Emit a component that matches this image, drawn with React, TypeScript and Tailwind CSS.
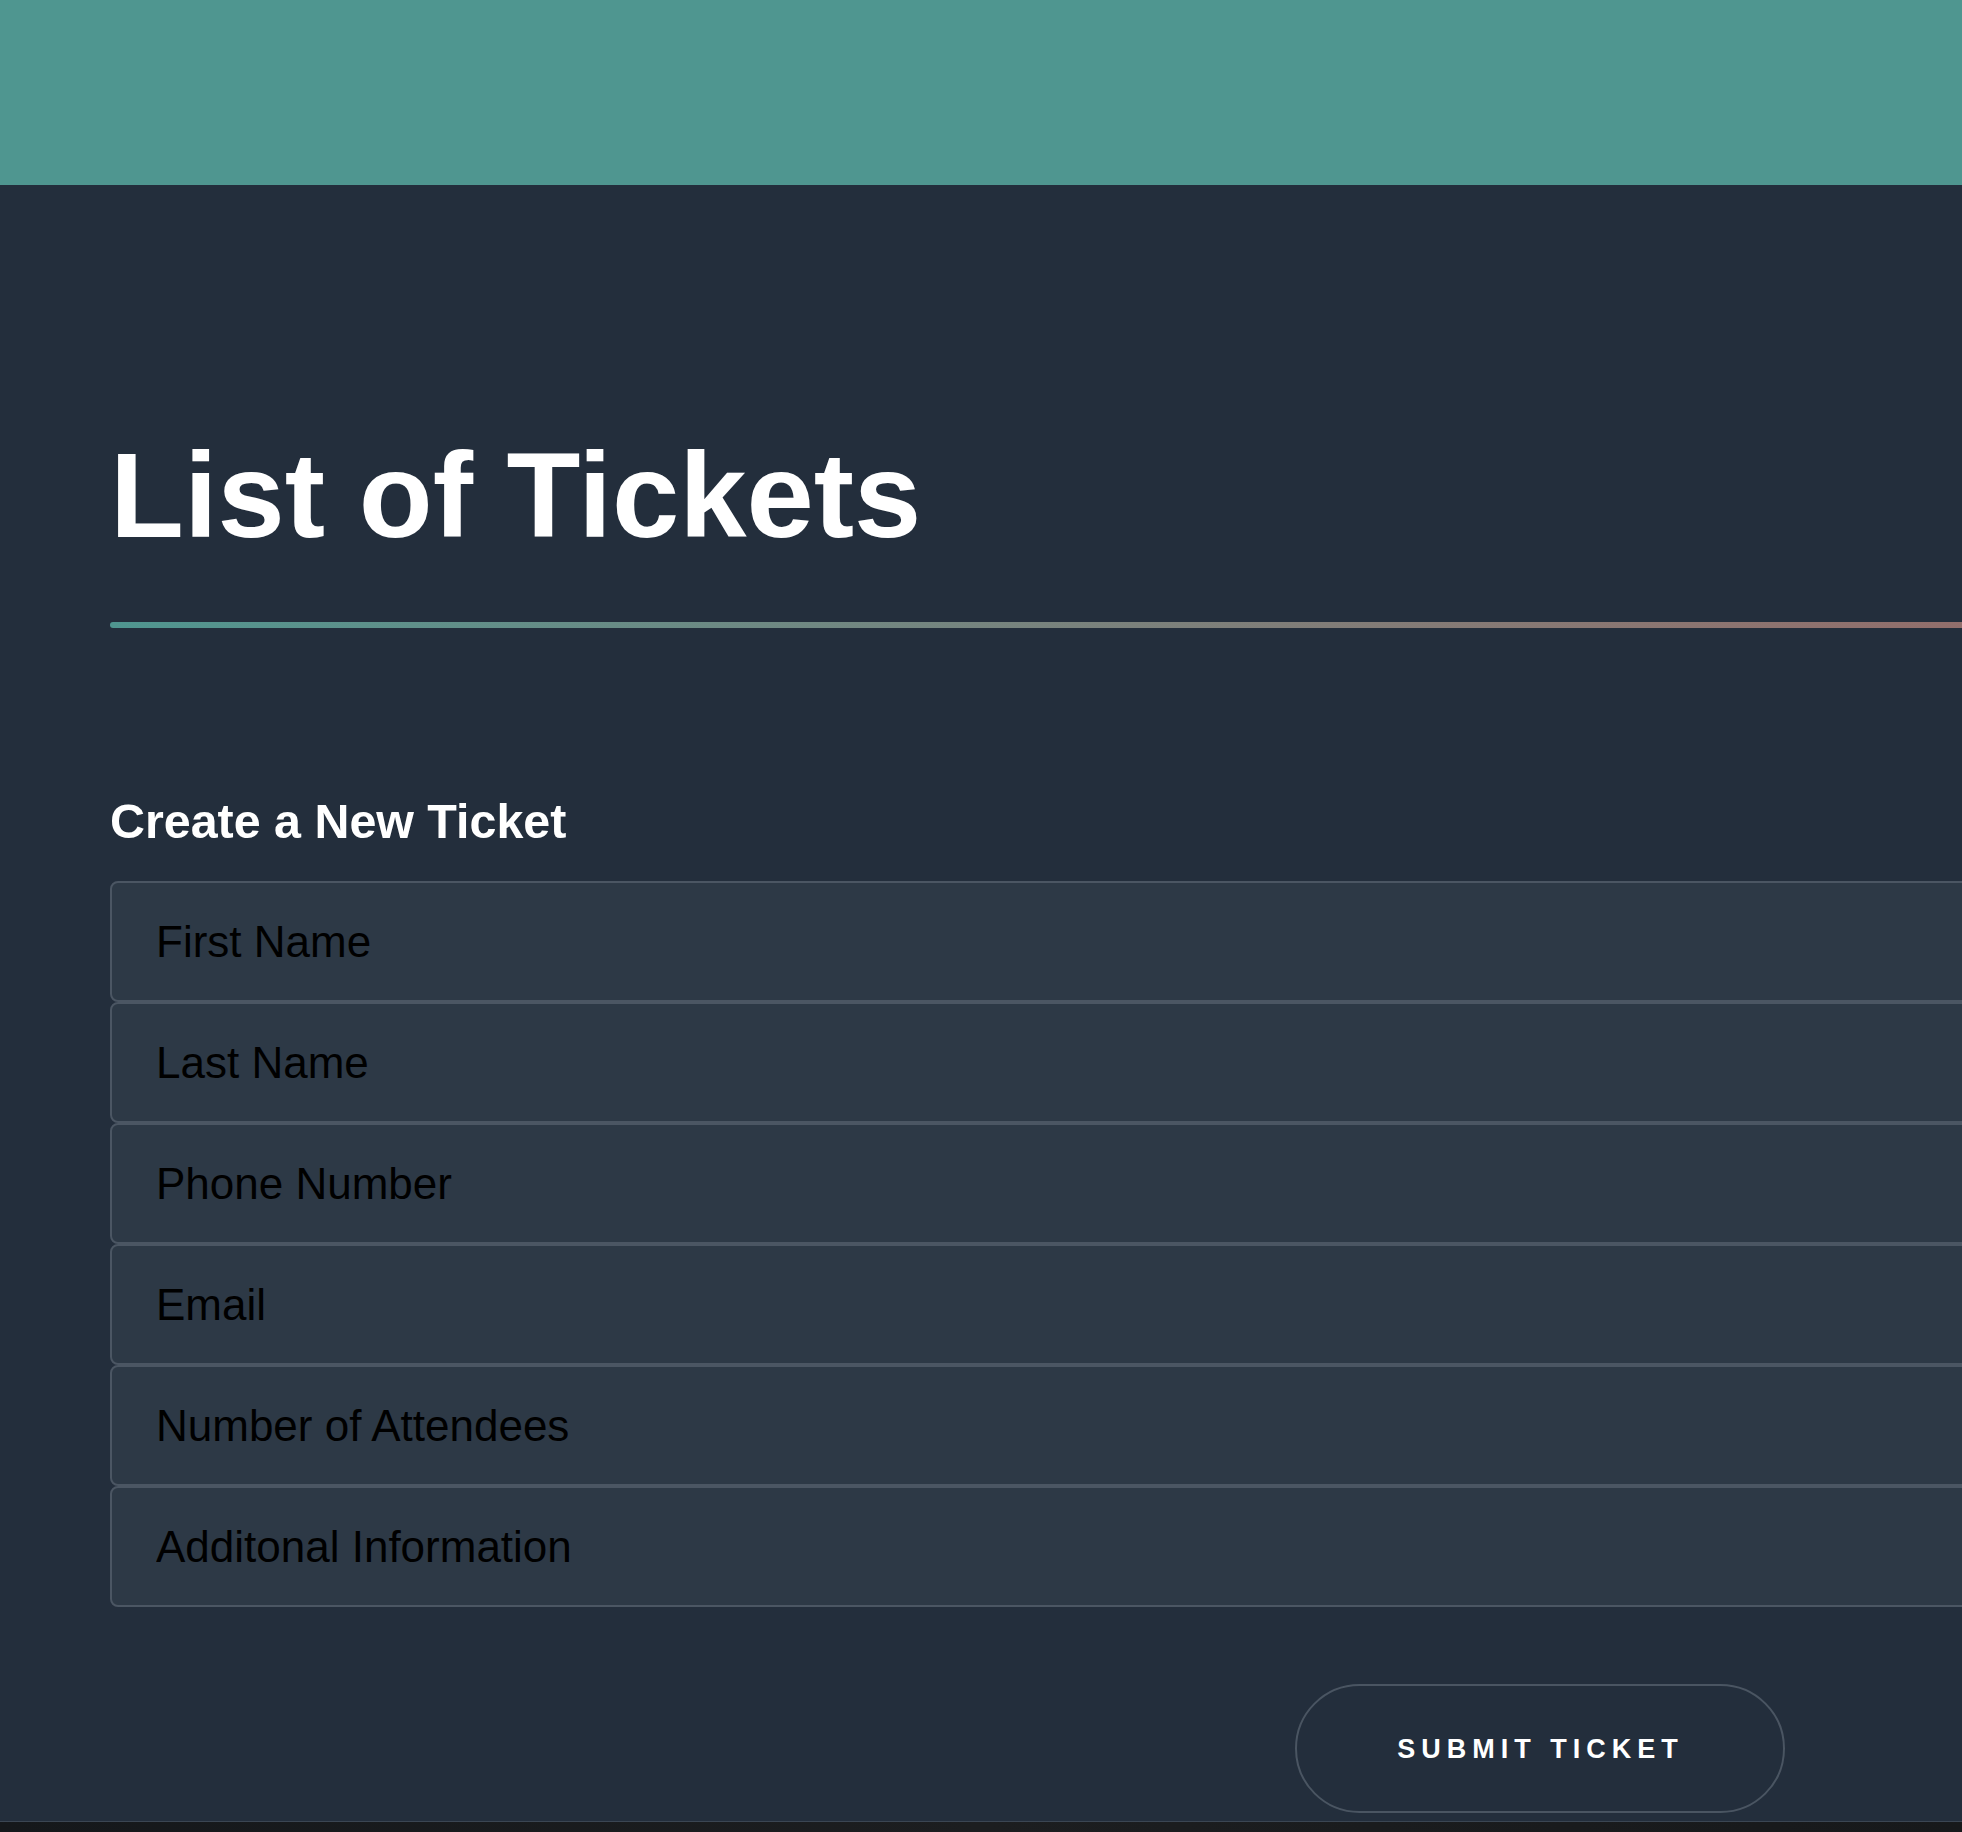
import React from "react";

const fields = [
  "First Name",
  "Last Name",
  "Phone Number",
  "Email",
  "Number of Attendees",
  "Additonal Information",
];

export default function App() {
  return (
    <div
      className="min-h-screen w-full overflow-hidden bg-[#232e3c] flex flex-col"
      style={{ fontFamily: '"Liberation Sans", Arial, sans-serif' }}
    >
      <header className="h-[185px] w-full bg-[#4f9690] shrink-0" />

      <main className="pl-[110px] w-[2969px] shrink-0">
        <h1 className="mt-[250px] text-[121px] leading-none font-bold text-white">
          List of Tickets
        </h1>

        <div className="mt-[66px] h-[6px] w-[2859px] rounded-full bg-gradient-to-r from-[#4f9690] to-[#a65458]" />

        <h2 className="mt-[169px] text-[48.4px] leading-none font-bold text-white">
          Create a New Ticket
        </h2>

        <form className="mt-[36px] w-[2859px] flex flex-col">
          {fields.map((f) => (
            <input
              key={f}
              type="text"
              placeholder={f}
              className="h-[121px] w-full rounded-[8px] border-2 border-[#4b5663] bg-[#2d3946] pl-[44px] pr-10 text-[44px] text-black placeholder:text-black outline-none"
            />
          ))}

          <div className="mt-[77px] flex justify-center">
            <button
              type="button"
              className="h-[129px] w-[490px] rounded-full border-2 border-[#4a5562] bg-transparent pl-[2px] text-[27px] font-bold uppercase tracking-[6px] text-white"
            >
              Submit Ticket
            </button>
          </div>
        </form>
      </main>

      <div className="mt-[8px] flex-1 min-h-[11px] border-t border-[#3b4653] bg-gradient-to-r from-[#15181b] via-[#1c1e20] to-[#17191b]" />
    </div>
  );
}
